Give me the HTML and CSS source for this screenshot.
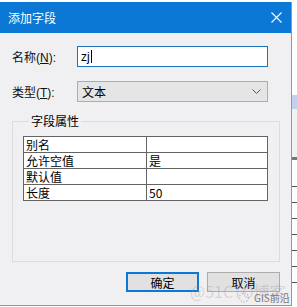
FILE: index.html
```html
<!DOCTYPE html>
<html lang="zh-CN">
	<head>
		<meta charset="UTF-8">
		<meta name="viewport" content="width=device-width, initial-scale=1.0">
		<title>添加字段</title>
		<link rel="stylesheet" href="styles.css">
	</head>
	<body>
		<div class="screen">
			<div class="dialog">
				<div class="titlebar">
					<span class="title">添加字段</span>
					<svg class="close" width="11" height="11" viewBox="0 0 11 11">
						<path d="M0.5 0.5 L10.5 10.5 M10.5 0.5 L0.5 10.5" stroke="#fff" stroke-width="1.1" fill="none"/>
					</svg>
				</div>
				<div class="body">
					<div class="form-row">
						<label class="form-label">名称(<u>N</u>):</label>
						<div class="textbox">zj<span class="caret"></span></div>
					</div>
					<div class="form-row">
						<label class="form-label">类型(<u>T</u>):</label>
						<div class="combo">
							<span>文本</span>
							<svg width="9" height="5" viewBox="0 0 9 5">
								<path d="M0.5 0.5 L4.5 4.5 L8.5 0.5" stroke="#555" stroke-width="1" fill="none"/>
							</svg>
						</div>
					</div>
					<div class="group">
						<div class="group-title">字段属性</div>
						<table class="props">
							<tr><td class="key">别名</td><td></td></tr>
							<tr><td class="key">允许空值</td><td>是</td></tr>
							<tr><td class="key">默认值</td><td></td></tr>
							<tr><td class="key">长度</td><td>50</td></tr>
						</table>
					</div>
					<div class="buttons">
						<button class="btn btn-default">确定</button>
						<button class="btn">取消</button>
					</div>
				</div>
				<div class="watermark">@51CTO博客</div>
				<div class="badge">
					<svg width="13" height="11" viewBox="0 0 13 11">
						<circle cx="6" cy="5.5" r="4.5" stroke="#bbb" stroke-width="1.2" stroke-dasharray="1.5 1.5" fill="none"/>
					</svg>
					<span>GIS前沿</span>
				</div>
			</div>
			<div class="backdrop">
				<div class="band"></div>
				<div class="gray"></div>
				<div class="grid-line"></div>
				<div class="grid-line"></div>
				<div class="grid-line"></div>
				<div class="grid-line"></div>
				<div class="grid-line"></div>
				<div class="grid-line"></div>
				<div class="grid-line"></div>
			</div>
		</div>
	</body>
</html>
```

FILE: styles.css
```css
body {
	margin: 0;
	background-color: #fff;
	font-family: "Liberation Sans", "Noto Sans CJK SC", sans-serif;
	font-size: 12px;
	color: #000;
}
.screen {
	display: flex;
	width: 297px;
	height: 307px;
	overflow: hidden;
}
.dialog {
	position: relative;
	flex: none;
	width: 291px;
	height: 303px;
	margin-top: 2px;
	background-color: #f0eff1;
	border-right: 1px solid #5ea7d8;
	border-bottom: 1px solid #5ea7d8;
	display: flex;
	flex-direction: column;
}
.titlebar {
	height: 31px;
	background-color: #0a78d4;
	display: flex;
	align-items: center;
	justify-content: space-between;
	padding: 0 9px 0 8px;
	flex: none;
}
.title {
	color: #fff;
	font-size: 12px;
	font-family: "Noto Sans CJK SC", sans-serif;
}
.body {
	display: flex;
	flex-direction: column;
	padding-top: 13px;
}
.form-row {
	display: flex;
	align-items: center;
	margin-bottom: 14px;
	padding-left: 12px;
}
.form-row + .form-row {
	margin-bottom: 0;
}
.form-label {
	width: 65px;
	font-size: 12px;
	color: #111;
}
.textbox {
	box-sizing: border-box;
	width: 191px;
	height: 21px;
	border: 1px solid #1a73b8;
	background: #fff;
	padding-left: 3px;
	display: flex;
	align-items: center;
	font-size: 12px;
}
.caret {
	display: inline-block;
	width: 1px;
	height: 13px;
	background: #000;
	margin-left: 1px;
}
.combo {
	box-sizing: border-box;
	width: 191px;
	height: 21px;
	border: 1px solid #adadad;
	background: #e5e5e5;
	padding: 0 6px 0 4px;
	display: flex;
	align-items: center;
	justify-content: space-between;
	font-family: "Noto Sans CJK SC", sans-serif;
}
.group {
	box-sizing: border-box;
	width: 268px;
	margin: 19px 0 0 12px;
	border: 1px solid #dcdcdc;
	padding: 0 0 60px 10px;
}
.group-title {
	width: fit-content;
	height: 14px;
	margin: -8px 0 0 6px;
	padding: 0 2px;
	line-height: 14px;
	background-color: #f0eff1;
	font-family: "Noto Sans CJK SC", sans-serif;
}
.props {
	margin-top: 8px;
	width: 245px;
	border-collapse: collapse;
	background: #fff;
	font-family: "Noto Sans CJK SC", sans-serif;
	font-size: 12px;
}
.props td {
	border: 1px solid #646464;
	height: 15px;
	padding: 0 2px;
	line-height: 14px;
}
.props .key {
	width: 118px;
}
.buttons {
	display: flex;
	justify-content: flex-end;
	gap: 8px;
	padding-right: 11px;
	margin-top: 10px;
}
.btn {
	box-sizing: border-box;
	width: 73px;
	height: 20px;
	border: 1px solid #adadad;
	background: #e1e1e1;
	font-family: "Noto Sans CJK SC", sans-serif;
	font-size: 12px;
	padding: 0;
	color: #000;
}
.btn-default {
	border: 2px solid #0a78d4;
}
.watermark {
	position: absolute;
	left: 190px;
	top: 280px;
	font-size: 16px;
	color: rgba(160, 160, 170, 0.35);
	font-family: "Noto Sans CJK SC", sans-serif;
	line-height: 18px;
}
.badge {
	position: absolute;
	left: 238px;
	top: 290px;
	display: flex;
	align-items: center;
	gap: 3px;
	font-size: 10px;
	line-height: 11px;
	color: #777;
	font-family: "Noto Sans CJK SC", sans-serif;
}
.backdrop {
	flex: 1;
	display: flex;
	flex-direction: column;
	padding-top: 95px;
	background-color: #fff;
}
.band {
	height: 14px;
	background-color: #c3d1ec;
}
.gray {
	height: 48px;
	background-color: #f2f2f2;
	border-bottom: 3px solid #777;
	margin-bottom: 11px;
}
.grid-line {
	height: 15px;
	border-bottom: 1px solid #555;
}
```
